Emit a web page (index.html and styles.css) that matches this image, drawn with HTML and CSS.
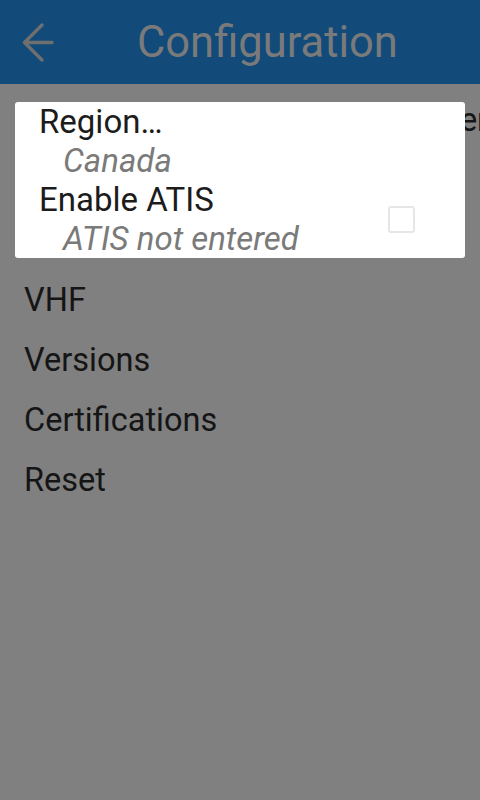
FILE: index.html
```html
<!DOCTYPE html>
<html lang="en">
<head>
    <meta charset="UTF-8">
    <meta name="viewport" content="width=device-width, initial-scale=1.0">
    <title>Configuration</title>
    <link rel="stylesheet" href="styles.css">
</head>
<body>
    <header class="appbar">
        <svg class="back" width="40" height="48" viewBox="0 0 40 48">
            <path d="M7 23.5H34M24 6L6.5 23.5L24 41" fill="none" stroke="#6f6f6f" stroke-width="3.4" stroke-linecap="round" stroke-linejoin="round"/>
        </svg>
        <h1 class="title">Configuration</h1>
    </header>

    <ul class="settings">
        <li class="wide">Flight Information Region Center</li>
        <li></li>
        <li></li>
        <li>VHF</li>
        <li>Versions</li>
        <li>Certifications</li>
        <li>Reset</li>
    </ul>

    <div class="popup">
        <div class="pref">
            <div class="pref-text">
                <div class="pref-title">Region…</div>
                <div class="pref-summary">Canada</div>
            </div>
        </div>
        <div class="pref">
            <div class="pref-text">
                <div class="pref-title">Enable ATIS</div>
                <div class="pref-summary">ATIS not entered</div>
            </div>
            <span class="checkbox"></span>
        </div>
    </div>
</body>
</html>
```

FILE: styles.css
```css
body {
    font-family: Roboto, 'Noto Sans', sans-serif;
    margin: 0;
    padding: 0;
    background: #808080;
    color: #151515;
    height: 800px;
    overflow: hidden;
}
.appbar {
    display: flex;
    align-items: center;
    height: 84px;
    background: #124b7a;
    padding-left: 18px;
}
.back {
    display: block;
    margin-top: 1px;
}
.title {
    margin: 0 0 0 79px;
    font-size: 43.5px;
    font-weight: 400;
    color: #7a7a7a;
}
.settings {
    list-style: none;
    margin: 0;
    padding: 6px 0 0 0;
}
.settings li {
    height: 60px;
    line-height: 60px;
    padding-left: 24px;
    font-size: 32.5px;
    color: #151515;
    white-space: nowrap;
}
.settings li.wide {
    letter-spacing: -0.15px;
}
.popup {
    position: absolute;
    top: 102px;
    left: 15px;
    width: 450px;
    height: 156px;
    background: #ffffff;
    border-radius: 3px;
}
.pref {
    display: flex;
    align-items: center;
    padding-left: 24px;
    padding-right: 50px;
}
.pref-text {
    flex: 1;
}
.pref-title {
    font-size: 33px;
    line-height: 39px;
    color: #1c1c1c;
}
.pref-summary {
    font-size: 33px;
    line-height: 39px;
    font-style: italic;
    color: #7a7a7a;
    padding-left: 24px;
}
.checkbox {
    width: 23px;
    height: 23px;
    border: 2px solid #e6e6e6;
    border-radius: 3px;
}
```
